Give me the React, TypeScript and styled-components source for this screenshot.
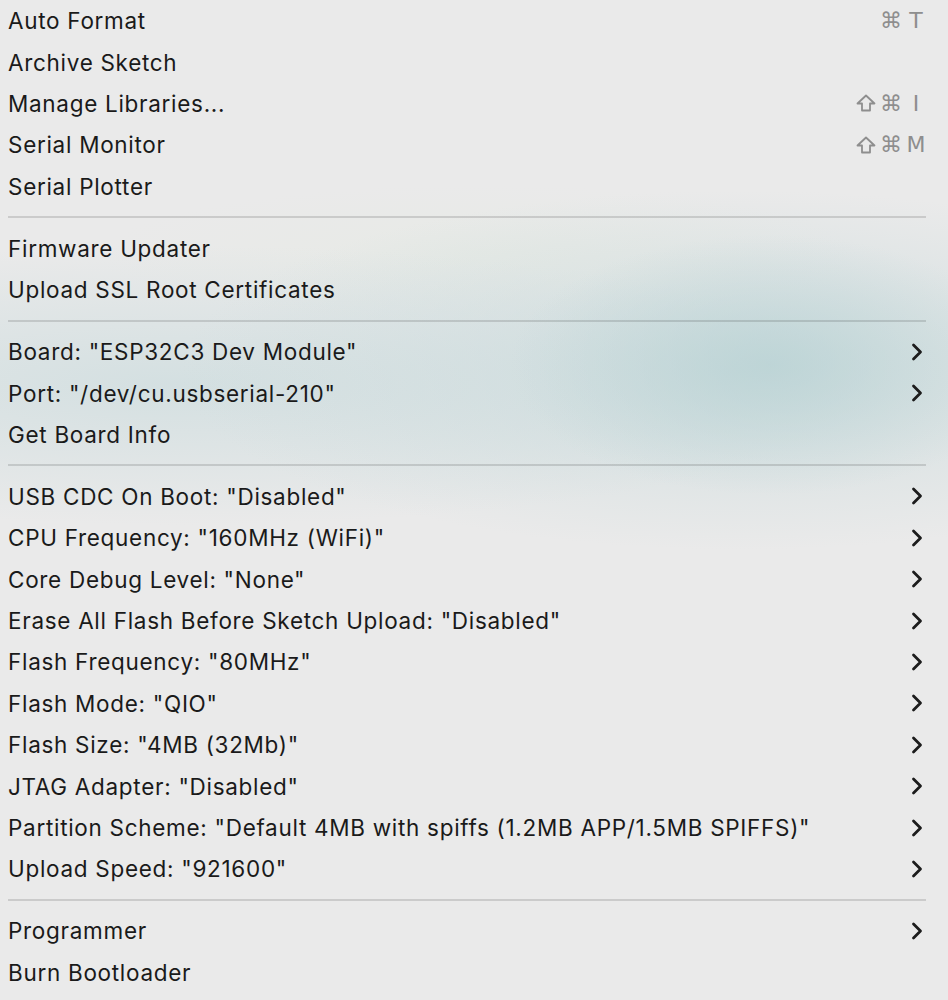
import React from 'react';
import styled, {createGlobalStyle} from 'styled-components';

const GlobalStyle = createGlobalStyle`
  html, body {
    margin: 0;
    padding: 0;
  }
  body {
    font-family: Inter, "Noto Sans", "Liberation Sans", sans-serif;
    -webkit-font-smoothing: antialiased;
  }
`

type ItemType = {
    label: string
    shortcut?: string[]
    submenu?: boolean
}

const groups: ItemType[][] = [
    [
        {label: 'Auto Format', shortcut: ['⌘', 'T']},
        {label: 'Archive Sketch'},
        {label: 'Manage Libraries...', shortcut: ['⇧', '⌘', 'I']},
        {label: 'Serial Monitor', shortcut: ['⇧', '⌘', 'M']},
        {label: 'Serial Plotter'},
    ],
    [
        {label: 'Firmware Updater'},
        {label: 'Upload SSL Root Certificates'},
    ],
    [
        {label: 'Board: "ESP32C3 Dev Module"', submenu: true},
        {label: 'Port: "/dev/cu.usbserial-210"', submenu: true},
        {label: 'Get Board Info'},
    ],
    [
        {label: 'USB CDC On Boot: "Disabled"', submenu: true},
        {label: 'CPU Frequency: "160MHz (WiFi)"', submenu: true},
        {label: 'Core Debug Level: "None"', submenu: true},
        {label: 'Erase All Flash Before Sketch Upload: "Disabled"', submenu: true},
        {label: 'Flash Frequency: "80MHz"', submenu: true},
        {label: 'Flash Mode: "QIO"', submenu: true},
        {label: 'Flash Size: "4MB (32Mb)"', submenu: true},
        {label: 'JTAG Adapter: "Disabled"', submenu: true},
        {label: 'Partition Scheme: "Default 4MB with spiffs (1.2MB APP/1.5MB SPIFFS)"', submenu: true},
        {label: 'Upload Speed: "921600"', submenu: true},
    ],
    [
        {label: 'Programmer', submenu: true},
        {label: 'Burn Bootloader'},
    ],
]

const Chevron = () => (
    <svg width="12" height="18" viewBox="0 0 12 18" fill="none">
        <path d="M2.5 2 L9.5 9 L2.5 16" stroke="#1c1c1c" strokeWidth="2.8" strokeLinecap="round" strokeLinejoin="round"/>
    </svg>
)

const ShiftIcon = () => (
    <svg width="20" height="18" viewBox="0 0 20 18" fill="none">
        <path d="M10 1.5 L18.5 9.5 L14 9.5 L14 16.5 L6 16.5 L6 9.5 L1.5 9.5 Z"
              stroke="#8e8e8e" strokeWidth="1.8" strokeLinejoin="round"/>
    </svg>
)

const MenuItem = ({item}: { item: ItemType }) => (
    <Row>
        <Label>{item.label}</Label>
        {item.shortcut && (
            <Shortcut>
                {item.shortcut.map((k, i) =>
                    k === '⇧' ? <ShiftIcon key={i}/> : <Key key={i}>{k}</Key>
                )}
            </Shortcut>
        )}
        {item.submenu && <Chevron/>}
    </Row>
)

export default function App() {
    return (
        <>
            <GlobalStyle/>
            <Menu>
                {groups.map((group, gi) => (
                    <React.Fragment key={gi}>
                        {gi > 0 && <Separator/>}
                        {group.map((item) => <MenuItem key={item.label} item={item}/>)}
                    </React.Fragment>
                ))}
            </Menu>
        </>
    )
}

const Menu = styled.div`
  width: 948px;
  height: 1000px;
  box-sizing: border-box;
  padding: 0 22px 0 8px;
  overflow: hidden;
  background:
    radial-gradient(ellipse 260px 130px at 770px 365px, rgba(184, 210, 212, 0.75), rgba(184, 210, 212, 0) 100%),
    radial-gradient(ellipse 560px 180px at 740px 370px, rgba(196, 216, 218, 0.7), rgba(196, 216, 218, 0) 100%),
    radial-gradient(ellipse 700px 140px at 180px 385px, rgba(204, 220, 222, 0.75), rgba(204, 220, 222, 0) 100%),
    radial-gradient(ellipse 380px 70px at 480px 255px, rgba(230, 234, 228, 0.7), rgba(230, 234, 228, 0) 100%),
    #eaeaea;
`
const Row = styled.div`
  height: 41.4px;
  display: flex;
  align-items: center;
  justify-content: space-between;
  color: #1a1a1a;
  font-size: 22.5px;
  letter-spacing: 0.7px;
  svg {
    flex-shrink: 0;
    margin-right: 3px;
  }
`
const Label = styled.span`
  white-space: nowrap;
`
const Shortcut = styled.span`
  display: flex;
  align-items: center;
  gap: 4px;
  color: #8e8e8e;
  font-size: 22px;
  letter-spacing: 0;
  font-family: "DejaVu Sans", "Noto Sans", sans-serif;
  svg {
    margin-right: 0;
  }
`
const Key = styled.span`
  min-width: 20px;
  text-align: center;
`
const Separator = styled.div`
  height: 2px;
  margin: 9.3px 0;
  background: rgba(0, 0, 0, 0.13);
`
